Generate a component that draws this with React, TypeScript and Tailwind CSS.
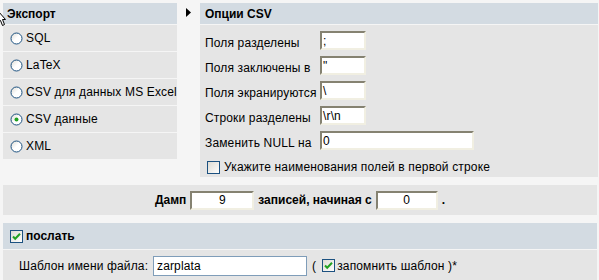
import React from 'react'

const font = { fontFamily: '"Liberation Sans", Arial, sans-serif' }

function Radio({ checked }: { checked?: boolean }) {
  return (
    <svg width="13" height="13" viewBox="0 0 13 13" className="shrink-0">
      <defs>
        <linearGradient id="rg" x1="0" y1="0" x2="1" y2="1">
          <stop offset="0" stopColor="#dcdad2" />
          <stop offset="0.5" stopColor="#ffffff" />
          <stop offset="1" stopColor="#ffffff" />
        </linearGradient>
      </defs>
      <circle cx="6.5" cy="6.5" r="5.5" fill="url(#rg)" stroke="#1c5180" strokeWidth="1" />
      {checked && <circle cx="6.5" cy="6.5" r="2" fill="#21a121" />}
    </svg>
  )
}

function Check({ checked }: { checked?: boolean }) {
  return (
    <svg width="13" height="13" viewBox="0 0 13 13" className="shrink-0">
      <defs>
        <linearGradient id="cg" x1="0" y1="0" x2="1" y2="1">
          <stop offset="0" stopColor="#dcdad2" />
          <stop offset="1" stopColor="#ffffff" />
        </linearGradient>
      </defs>
      <rect x="0.5" y="0.5" width="12" height="12" fill="url(#cg)" stroke="#1c5180" />
      {checked && (
        <path d="M3 6.5 L5.2 8.8 L10 3.8" fill="none" stroke="#21a121" strokeWidth="2" />
      )}
    </svg>
  )
}

function Field({ value, w, center }: { value: string; w: string; center?: boolean }) {
  return (
    <div
      className={`${w} shrink-0 h-[19px] bg-white border-2 border-t-[#858271] border-l-[#858271] border-b-[#f1efe2] border-r-[#f1efe2] flex items-center px-[1px] leading-none font-normal ${center ? 'justify-center' : ''}`}
    >
      {value}
    </div>
  )
}

const exportTypes = ['SQL', 'LaTeX', 'CSV для данных MS Excel', 'CSV данные', 'XML']

const csvOptions = [
  { label: 'Поля разделены', value: ';', w: 'w-[46px]' },
  { label: 'Поля заключены в', value: '"', w: 'w-[46px]' },
  { label: 'Поля экранируются', value: '\\', w: 'w-[46px]' },
  { label: 'Строки разделены', value: '\\r\\n', w: 'w-[46px]' },
  { label: 'Заменить NULL на', value: '0', w: 'w-[154px]' },
]

export default function App() {
  return (
    <div style={font} className="w-[599px] h-[280px] bg-[#f5f5f5] text-[12px] text-black tracking-[0.15px] whitespace-nowrap pt-[3px] overflow-hidden relative">
      <div className="flex">
        <div className="ml-[3px] w-[174px] flex flex-col gap-[1px]">
          <div className="h-[21px] bg-[#d3dbe2] font-bold tracking-normal pl-[4px] flex items-center">Экспорт</div>
          {exportTypes.map((t, i) => (
            <div key={t} className="h-[26px] bg-[#e5e5e5] flex items-center pl-[7px] gap-[3px]">
              <Radio checked={i === 3} />
              <span>{t}</span>
            </div>
          ))}
        </div>
        <div className="w-[23px] pt-[5px] pl-[9px]">
          <svg width="5" height="9" viewBox="0 0 5 9">
            <path d="M0 0 L5 4.5 L0 9 Z" fill="#000" />
          </svg>
        </div>
        <div className="w-[398px] flex flex-col gap-[1px]">
          <div className="h-[21px] bg-[#d3dbe2] font-bold tracking-normal pl-[5px] flex items-center">Опции CSV</div>
          <div className="h-[152px] bg-[#e5e5e5] pt-[6px] pl-[5px]">
            {csvOptions.map((o) => (
              <div key={o.label} className="h-[25px] flex items-start">
                <span className="w-[115px] shrink-0 pt-[3px]">{o.label}</span>
                <Field value={o.value} w={o.w} />
              </div>
            ))}
            <div className="flex items-center gap-[4px] pl-[2px] mt-[2px]">
              <Check />
              <span>Укажите наименования полей в первой строке</span>
            </div>
          </div>
        </div>
      </div>

      <div className="ml-[3px] w-[594px] h-[30px] mt-[8px] bg-[#e5e5e5] flex items-center justify-center gap-[4px] font-bold tracking-normal">
        <span>Дамп</span>
        <Field value="9" w="w-[64px]" center />
        <span>записей, начиная с</span>
        <Field value="0" w="w-[62px]" center />
        <span>.</span>
      </div>

      <div className="ml-[3px] w-[594px] mt-[8px] flex flex-col gap-[1px]">
        <div className="h-[26px] bg-[#d3dbe2] font-bold tracking-normal pl-[7px] flex items-center gap-[3px]">
          <Check checked />
          <span>послать</span>
        </div>
        <div className="h-[31px] bg-[#e5e5e5] flex items-center pl-[16px]">
          <span className="w-[134px] shrink-0">Шаблон имени файла:</span>
          <div className="w-[154px] shrink-0 h-[20px] bg-white border border-[#7f9db9] flex items-center px-[3px]">zarplata</div>
          <span className="ml-[5px]">(</span>
          <span className="ml-[6px] flex items-center gap-[2px]">
            <Check checked />
            <span>запомнить шаблон )*</span>
          </span>
        </div>
      </div>

      <svg width="8" height="16" viewBox="0 0 8 16" className="absolute left-0 top-[11px]">
        <path d="M0 0 L0 11 L2 9 L4 14 L6 13 L4 8 L7 8 Z" fill="#fff" stroke="#000" strokeWidth="1" transform="translate(-1.5 0.5)" />
      </svg>
    </div>
  )
}
